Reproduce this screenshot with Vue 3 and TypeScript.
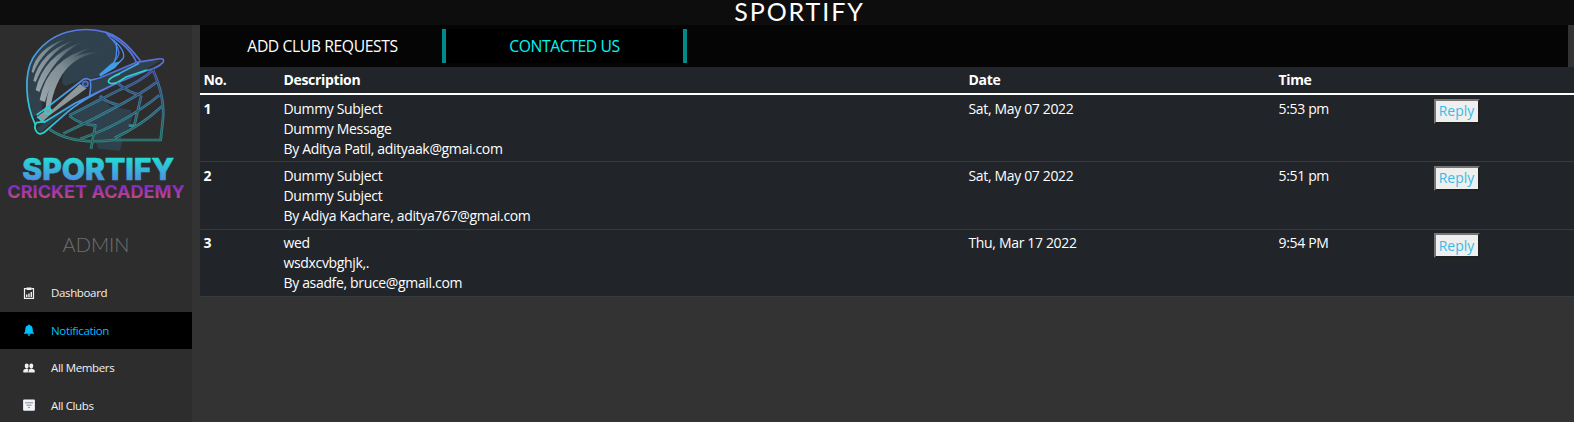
<script setup lang="ts">
interface NavItem {
  label: string
  icon: 'dashboard' | 'bell' | 'people' | 'filter'
  active?: boolean
}
interface Contact {
  subject: string
  message: string
  by: string
  date: string
  time: string
}

const nav: NavItem[] = [
  { label: 'Dashboard', icon: 'dashboard' },
  { label: 'Notification', icon: 'bell', active: true },
  { label: 'All Members', icon: 'people' },
  { label: 'All Clubs', icon: 'filter' },
]

const contacts: Contact[] = [
  { subject: 'Dummy Subject', message: 'Dummy Message', by: 'By Aditya Patil, adityaak@gmai.com', date: 'Sat, May 07 2022', time: '5:53 pm' },
  { subject: 'Dummy Subject', message: 'Dummy Subject', by: 'By Adiya Kachare, aditya767@gmai.com', date: 'Sat, May 07 2022', time: '5:51 pm' },
  { subject: 'wed', message: 'wsdxcvbghjk,.', by: 'By asadfe, bruce@gmail.com', date: 'Thu, Mar 17 2022', time: '9:54 PM' },
]
</script>

<template>
  <div class="page">
    <header class="topbar">SPORTIFY</header>
    <div class="body">
      <aside class="sidebar">
        <svg class="logo" viewBox="0 75 576 555" aria-label="Sportify Cricket Academy">
          <defs>
            <linearGradient id="shell" gradientUnits="userSpaceOnUse" x1="90" y1="400" x2="280" y2="90">
              <stop offset="0" stop-color="#25d9cf" />
              <stop offset=".4" stop-color="#41a9e6" />
              <stop offset="1" stop-color="#5877e0" />
            </linearGradient>
            <linearGradient id="peak" gradientUnits="userSpaceOnUse" x1="110" y1="395" x2="330" y2="250">
              <stop offset="0" stop-color="#25dacb" />
              <stop offset=".5" stop-color="#459fe8" />
              <stop offset="1" stop-color="#5a73dc" />
            </linearGradient>
            <linearGradient id="cage" gradientUnits="userSpaceOnUse" x1="0" y1="215" x2="0" y2="430">
              <stop offset="0" stop-color="#4a62b4" />
              <stop offset=".5" stop-color="#3a829f" />
              <stop offset="1" stop-color="#2b8f83" />
            </linearGradient>
            <linearGradient id="vent" gradientUnits="userSpaceOnUse" x1="120" y1="290" x2="270" y2="130">
              <stop offset="0" stop-color="#98a4a9" />
              <stop offset=".5" stop-color="#7f8c93" />
              <stop offset="1" stop-color="#30414e" />
            </linearGradient>
            <linearGradient id="name" x1="0" y1="0" x2="0" y2="1">
              <stop offset=".2" stop-color="#25d8d5" />
              <stop offset=".85" stop-color="#518be0" />
            </linearGradient>
            <linearGradient id="sub" x1="0" y1="0" x2="0" y2="1">
              <stop offset=".2" stop-color="#8128cf" />
              <stop offset=".85" stop-color="#c4497d" />
            </linearGradient>
          </defs>

          <path fill="#30414e" d="M82 290C72 210 90 150 180 108C225 88 290 86 320 103C350 127 360 160 340 188L300 228L270 238L240 240L196 258L185 250L114 345L98 350Q84 320 82 290Z" />
          <path fill="#2d2d2d" d="M124 340L134 322L152 324L196 260L186 250Q184 215 215 180Q172 215 150 322L128 300Z" />
          <path fill="#30414e" d="M275 244L299 238L412 186L482 181L440 208L350 249L225 312L150 372L122 398L110 385L135 367L225 310L275 283Z" />
          <path fill="#30414e" d="M215 342L300 290L330 318L392 330L397 352L385 386L362 402L367 425L360 452L295 446L285 420V378L240 366Z" />

          <g fill="url(#vent)">
            <path d="M95 215Q108 146 195 118Q128 150 100 219Z" />
            <path d="M100 242Q120 156 217 122Q140 162 107 246Z" />
            <path d="M107 270Q130 166 246 126Q160 170 118 276Z" />
            <path d="M119 300Q140 176 280 140Q172 182 134 306Z" />
            <path d="M137 323C148 214 204 145 318 157C222 158 168 218 151 326Z" />
          </g>
          <path fill="#8c989d" d="M114 348L134 334L158 328L240 252L260 265L150 345L124 368Z" />

          <g fill="none" stroke="url(#shell)" stroke-width="5" stroke-linecap="round" stroke-linejoin="round">
            <path d="M106 374C75 310 72 220 99 174C151 92 244 76 318 97C364 112 391 144 420 181" />
            <path d="M318 98C353 119 389 143 408 184" stroke="#5277df" />
            <path d="M322 104Q354 133 357 158Q356 179 302 224" stroke="#5277df" stroke-width="4" />
            <path d="M337 118Q377 151 370 174Q353 196 315 219" stroke="#4a8ce7" stroke-width="4" />
            <path d="M349 130Q354 172 337 196L302 225" stroke="#4a91e9" stroke-width="4" />
          </g>
          <path d="M298 222L335 190L362 184L345 204L300 230Z" fill="#419de8" />
          <g fill="none" stroke="url(#peak)" stroke-width="5" stroke-linejoin="round">
            <path d="M270 241L299 234L410 187L466 178Q497 172 489 187Q473 204 442 211L351 249C301 275 239 301 190 347L134 396Q114 410 106 388Q102 379 109 368L135 365L225 310L350 249" />
            <path d="M110 345L135 327L244 243Q256 230 270 240Q275 250 269 288M135 368L111 350" />
          </g>
          <path d="M342 229L417 190" fill="none" stroke="#45a6e5" stroke-width="5" />
          <path d="M360 221L342 229Q321 240 326 247Q331 254 351 248L378 231L440 210" fill="none" stroke="#2bd4c8" stroke-width="5" />
          <circle cx="256" cy="252" r="8" fill="#30414e" stroke="#526fd2" stroke-width="5" />
          <circle cx="144" cy="333" r="9" fill="#8c989d" stroke="#28d3d0" stroke-width="5" />

          <g fill="none" stroke="url(#cage)" stroke-width="8" stroke-linejoin="round">
            <path d="M458 208Q497 294 488 365L482 420H340Q216 435 149 388" />
            <path d="M462 208Q420 247 360 269L208 346M469 247Q400 300 190 401M478 286Q366 376 240 417M486 319Q423 378 344 414M353 249Q382 277 424 286M300 287Q316 307 356 315M208 347Q244 376 286 376L273 447M424 286L403 376L386 377" />
          </g>
          <path fill="none" stroke="#2e3b44" stroke-width="2" d="M458 208Q497 294 488 365L482 420H340Q216 435 149 388M462 208Q420 247 360 269L208 346M469 247Q400 300 190 401M478 286Q366 376 240 417M486 319Q423 378 344 414M353 249Q382 277 424 286M300 287Q316 307 356 315M208 347Q244 376 286 376L273 447M424 286L403 376" />

          <text x="67" y="541" class="logo-name" textLength="455" lengthAdjust="spacingAndGlyphs" fill="url(#name)" stroke="url(#name)">SPORTIFY</text>
          <text x="22" y="594" class="logo-sub" textLength="532" lengthAdjust="spacingAndGlyphs" fill="url(#sub)">CRICKET ACADEMY</text>
        </svg>
        <div class="role">ADMIN</div>
        <nav>
          <a v-for="item in nav" :key="item.label" class="nav-item" :class="{ active: item.active }">
            <svg v-if="item.icon === 'dashboard'" class="icon" viewBox="0 0 12 12">
              <path fill="none" stroke="currentColor" stroke-width="1.2" d="M3.7 1.6H1.5V11.3H10.5V1.6H8.3" />
              <path fill="currentColor" d="M3.5 .4H8.5V3H3.5ZM3 7.5H4.4V10H3ZM5.3 6.5H6.7V10H5.3ZM7.6 5H9V10H7.6Z" />
            </svg>
            <svg v-else-if="item.icon === 'bell'" class="icon" viewBox="0 0 12 12">
              <path fill="currentColor" d="M6 .4Q6.8 .4 6.9 1.3C9 1.8 9.7 3.5 9.7 5.5C9.7 7.6 10.1 8.4 11 9V9.7H1V9C1.9 8.4 2.3 7.6 2.3 5.5C2.3 3.5 3 1.8 5.1 1.3Q5.2 .4 6 .4ZM4.5 10.2H7.5Q7.3 11.7 6 11.7T4.5 10.2Z" />
            </svg>
            <svg v-else-if="item.icon === 'people'" class="icon" viewBox="0 0 12 12">
              <g fill="currentColor">
                <ellipse cx="3.7" cy="4" rx="2" ry="2.4" />
                <ellipse cx="8.3" cy="4" rx="2" ry="2.4" />
                <path d="M.3 10.4V8.3Q1 6.8 3.7 6.4Q5 6.5 5.4 7Q4.8 7.8 4.8 10.4ZM5.3 10.4Q5.1 7 8.3 6.4Q11 6.8 11.7 8.3V10.4Z" />
              </g>
            </svg>
            <svg v-else class="icon" viewBox="0 0 12 12">
              <rect x=".1" y=".5" width="11.8" height="11.2" rx="1" fill="#f1f5fb" />
              <path stroke="#85878b" stroke-width="1" d="M2 3.8H10M3.5 6.2H8.5M5 8.6H7" />
            </svg>
            <span>{{ item.label }}</span>
          </a>
        </nav>
      </aside>
      <main class="content">
        <div class="tabs">
          <div class="tab">ADD CLUB REQUESTS</div>
          <div class="tab selected">CONTACTED US</div>
        </div>
        <div class="table">
          <div class="row head">
            <b>No.</b><b>Description</b><b>Date</b><b>Time</b><span></span>
          </div>
          <div v-for="(c, i) in contacts" :key="i" class="row">
            <b>{{ i + 1 }}</b>
            <div>
              <div>{{ c.subject }}</div>
              <div>{{ c.message }}</div>
              <div>{{ c.by }}</div>
            </div>
            <span>{{ c.date }}</span>
            <span>{{ c.time }}</span>
            <div><button class="reply" type="button">Reply</button></div>
          </div>
        </div>
      </main>
    </div>
  </div>
</template>

<style>
body {
  background: #333;
}
</style>

<style scoped>
.page {
  height: 422px;
  display: flex;
  flex-direction: column;
  overflow: hidden;
  background: #333;
  color: #fff;
  font-family: 'Open Sans', 'Noto Sans', sans-serif;
}
.topbar {
  flex: 0 0 25px;
  background: #0d0d0d;
  text-align: center;
  font: 400 25px/23px Lato, sans-serif;
  letter-spacing: 1.9px;
  padding-left: 25px;
}
.body {
  flex: 1;
  min-height: 0;
  display: flex;
  gap: 8px;
}
.sidebar {
  flex: 0 0 192px;
  background: #2d2d2d;
}
.logo {
  display: block;
  width: 192px;
  height: 185px;
}
.logo-name {
  font: 800 90px Inter, sans-serif;
  stroke-width: 2;
}
.logo-sub {
  font: 700 52px Inter, sans-serif;
}
.role {
  height: 64px;
  line-height: 68px;
  text-align: center;
  color: #707070;
  font-family: Lato, sans-serif;
  font-weight: 300;
  font-size: 20px;
}
.nav-item {
  display: flex;
  align-items: center;
  height: 37.5px;
  padding-left: 23px;
  gap: 16px;
  font-size: 11.5px;
  letter-spacing: -0.35px;
  color: #f1f1f1;
}
.nav-item.active {
  background: #000;
  color: #00bfff;
}
.icon {
  width: 12px;
  height: 12px;
}
.content {
  flex: 1;
  min-width: 0;
}
.tabs {
  display: flex;
  box-sizing: border-box;
  width: 1368px;
  height: 42px;
  padding: 4px 0;
  background: #050505;
}
.tab {
  box-sizing: border-box;
  width: 246px;
  border-right: 4px solid #008b8b;
  padding-left: 3px;
  text-align: center;
  font-size: 15.7px;
  letter-spacing: -0.4px;
  line-height: 34px;
}
.tab.selected {
  width: 241px;
  padding-left: 0;
  background: #000;
  color: #00f5f5;
}
.table {
  background: #212529;
  font-size: 14px;
  letter-spacing: -0.34px;
  line-height: 20px;
}
.row {
  display: grid;
  grid-template-columns: 80px 685px 310px 155px 1fr;
  box-sizing: border-box;
  height: 67.4px;
  padding: 3.5px 3.5px 0;
  border-bottom: 1px solid #373b3e;
}
.row.head {
  height: 28px;
  padding-top: 3px;
  border-bottom: 2px solid #fff;
}
.reply {
  display: block;
  width: 46px;
  height: 25px;
  padding: 0;
  border: 2px outset #767676;
  background: #efefef;
  color: #3bbbe5;
  font: inherit;
}
</style>
